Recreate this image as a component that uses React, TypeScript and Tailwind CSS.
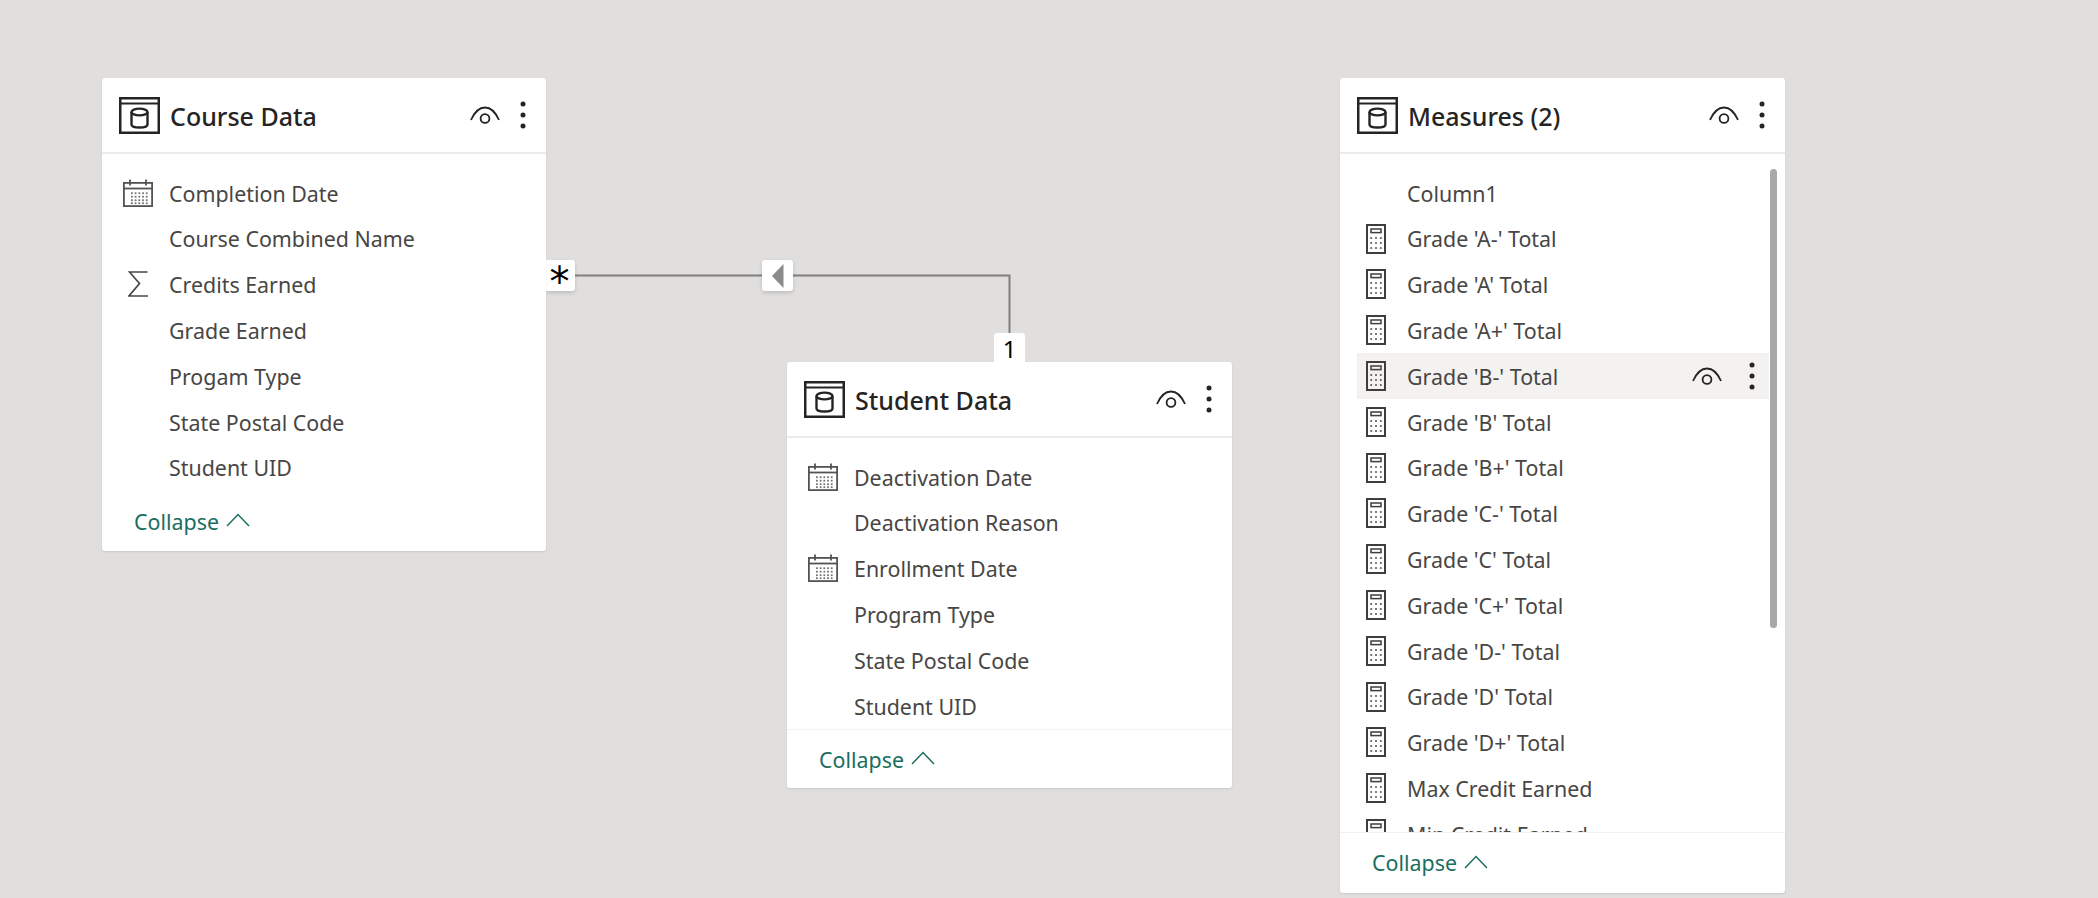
const font = { fontFamily: '"Noto Sans", sans-serif' };

type IconKind = "none" | "calendar" | "sigma" | "calc";

function TableIcon() {
  return (
    <svg width="41" height="37" viewBox="0 0 41 37" fill="none" stroke="#252423" className="shrink-0">
      <rect x="1.25" y="1.25" width="38.5" height="34.5" strokeWidth="2.5" />
      <path d="M1 6.5h39" strokeWidth="2" />
      <path d="M12.5 15v12.5c0 1.9 3.6 3 8 3s8-1.1 8-3V15" strokeWidth="2.4" />
      <ellipse cx="20.5" cy="15" rx="8" ry="3.4" strokeWidth="2.4" />
    </svg>
  );
}

function Eye() {
  return (
    <svg width="30" height="18" viewBox="0 0 30 18" fill="none" stroke="#252423" strokeWidth="1.8" className="shrink-0">
      <path d="M1 14C5 5 10 1.5 15 1.5S25 5 29 14" />
      <circle cx="15" cy="12.5" r="4.4" />
    </svg>
  );
}

function Dots() {
  return (
    <svg width="6" height="28" viewBox="0 0 6 28" fill="#252423" className="shrink-0">
      <circle cx="3" cy="3" r="2.5" />
      <circle cx="3" cy="14" r="2.5" />
      <circle cx="3" cy="25" r="2.5" />
    </svg>
  );
}

function Calendar() {
  const cols = [9, 12.7, 16.4, 20.1, 23.8];
  const rows = [14, 17.5, 21, 24];
  return (
    <svg width="30" height="28" viewBox="0 0 30 28" fill="none" stroke="#555352" strokeWidth="1.8">
      <rect x="0.9" y="3.9" width="28.2" height="23.2" />
      <path d="M1 9.5h28" />
      <path d="M7 0.5v6M23 0.5v6" />
      {rows.map((y) => cols.map((x) => <rect key={`${x}-${y}`} x={x - 1} y={y - 0.7} width="1.8" height="1.8" fill="#777573" stroke="none" />))}
    </svg>
  );
}

function Sigma() {
  return (
    <svg width="20" height="26" viewBox="0 0 20 26" fill="none" stroke="#484644" strokeWidth="1.7">
      <path d="M19.5 1H1.5l10 11.5L1 25h19" />
    </svg>
  );
}

function Calc() {
  const cols = [5.2, 10, 14.8];
  const rows = [14, 19, 24];
  return (
    <svg width="20" height="30" viewBox="0 0 20 30" fill="none" stroke="#403e3d" strokeWidth="2">
      <rect x="1" y="1" width="18" height="28" />
      <rect x="5" y="5" width="10" height="3.6" strokeWidth="1.5" />
      {rows.map((y) => cols.map((x) => <rect key={`${x}-${y}`} x={x - 0.9} y={y - 0.9} width="1.8" height="1.8" fill="#605e5c" stroke="none" />))}
    </svg>
  );
}

function Row({ label, icon = "none", hover = false }: { label: string; icon?: IconKind; hover?: boolean }) {
  return (
    <div className={`flex h-[45.8px] w-[412px] shrink-0 items-center ${hover ? "bg-[#f3f2f1]" : ""}`}>
      <div className="mr-[12px] flex w-[38px] shrink-0 justify-center">
        {icon === "calendar" && <Calendar />}
        {icon === "sigma" && <Sigma />}
        {icon === "calc" && <Calc />}
      </div>
      <span className="pt-[1px] text-[21.4px] leading-none whitespace-nowrap text-[#484644]">{label}</span>
      {hover && (
        <div className="mr-[14px] ml-auto flex items-center gap-[27px]">
          <Eye />
          <Dots />
        </div>
      )}
    </div>
  );
}

function Footer({ line }: { line: string }) {
  return (
    <div className={`flex h-[61px] shrink-0 items-center border-t pl-[32px] ${line}`}>
      <span className="text-[21.4px] leading-none text-[#1a6e60]">Collapse</span>
      <svg width="24" height="14" viewBox="0 0 24 14" fill="none" stroke="#1a6e60" strokeWidth="1.5" className="mb-[3px] ml-[7px]">
        <path d="M1 13 12 1.5 23 13" />
      </svg>
    </div>
  );
}

function Header({ title }: { title: string }) {
  return (
    <div className="flex h-[76px] shrink-0 items-center border-b-2 border-[#edebe9] pr-[20px] pl-[17px]">
      <TableIcon />
      <span className="ml-[10px] pt-[2px] text-[25px] leading-none font-medium whitespace-nowrap text-[#252423]">{title}</span>
      <div className="ml-auto flex items-center gap-[20px]">
        <Eye />
        <Dots />
      </div>
    </div>
  );
}

const courseRows: [string, IconKind][] = [
  ["Completion Date", "calendar"],
  ["Course Combined Name", "none"],
  ["Credits Earned", "sigma"],
  ["Grade Earned", "none"],
  ["Progam Type", "none"],
  ["State Postal Code", "none"],
  ["Student UID", "none"],
];

const studentRows: [string, IconKind][] = [
  ["Deactivation Date", "calendar"],
  ["Deactivation Reason", "none"],
  ["Enrollment Date", "calendar"],
  ["Program Type", "none"],
  ["State Postal Code", "none"],
  ["Student UID", "none"],
];

const measureRows = [
  "Grade 'A-' Total",
  "Grade 'A' Total",
  "Grade 'A+' Total",
  "Grade 'B-' Total",
  "Grade 'B' Total",
  "Grade 'B+' Total",
  "Grade 'C-' Total",
  "Grade 'C' Total",
  "Grade 'C+' Total",
  "Grade 'D-' Total",
  "Grade 'D' Total",
  "Grade 'D+' Total",
  "Max Credit Earned",
  "Min Credit Earned",
];

export default function App() {
  return (
    <div className="relative h-[898px] w-[2098px] overflow-hidden bg-[#e1dfdd]" style={font}>
      {/* relationship line */}
      <svg width="460" height="70" viewBox="0 0 460 70" fill="none" className="absolute top-[270px] left-[570px]">
        <path d="M0 5.5h439.5V70" stroke="#7f7f7f" strokeWidth="2" />
      </svg>

      <div className="absolute top-[260px] left-[546px] flex h-[31px] w-[29px] items-center justify-center rounded-r-[3px] bg-white shadow-[0_2px_4px_rgba(0,0,0,0.15)]">
        <span className="text-[40px] leading-none text-black" style={{ fontFamily: '"DejaVu Sans", sans-serif', transform: "translate(-1px, 6px)" }}>*</span>
      </div>
      <div className="absolute top-[260px] left-[762px] flex h-[31px] w-[31px] items-center justify-center rounded-[3px] bg-white shadow-[0_2px_4px_rgba(0,0,0,0.15)]">
        <svg width="12" height="24" viewBox="0 0 12 24" fill="#8a8a8a">
          <path d="M11.5 0v24L0 12z" />
        </svg>
      </div>
      <div className="absolute top-[333px] left-[994px] flex h-[32px] w-[31px] items-center justify-center rounded-t-[3px] bg-white">
        <span className="text-[24px] leading-none text-black">1</span>
      </div>

      {/* Course Data */}
      <div className="absolute top-[78px] left-[102px] flex h-[473px] w-[444px] flex-col rounded-[3px] bg-white shadow-[0_1px_2px_rgba(0,0,0,0.1)]">
        <Header title="Course Data" />
        <div className="ml-[17px] flex-1 pt-[16px]">
          {courseRows.map(([label, icon]) => (
            <Row key={label} label={label} icon={icon} />
          ))}
        </div>
        <Footer line="border-[#fcfcfc]" />
      </div>

      {/* Student Data */}
      <div className="absolute top-[362px] left-[787px] flex h-[426px] w-[445px] flex-col rounded-[3px] bg-white shadow-[0_1px_2px_rgba(0,0,0,0.1)]">
        <Header title="Student Data" />
        <div className="ml-[17px] flex-1 pt-[16px]">
          {studentRows.map(([label, icon]) => (
            <Row key={label} label={label} icon={icon} />
          ))}
        </div>
        <Footer line="border-[#f3f2f1]" />
      </div>

      {/* Measures */}
      <div className="absolute top-[78px] left-[1340px] flex h-[815px] w-[445px] flex-col rounded-[3px] bg-white shadow-[0_1px_2px_rgba(0,0,0,0.1)]">
        <Header title="Measures (2)" />
        <div className="relative min-h-0 flex-1 overflow-hidden pt-[16px] pl-[17px]">
          <Row label="Column1" />
          {measureRows.map((label) => (
            <Row key={label} label={label} icon="calc" hover={label === "Grade 'B-' Total"} />
          ))}
          <div className="absolute top-[15px] right-[8px] h-[459px] w-[7px] rounded-[4px] bg-[#a8a8a8]" />
        </div>
        <Footer line="border-[#f3f2f1]" />
      </div>
    </div>
  );
}
